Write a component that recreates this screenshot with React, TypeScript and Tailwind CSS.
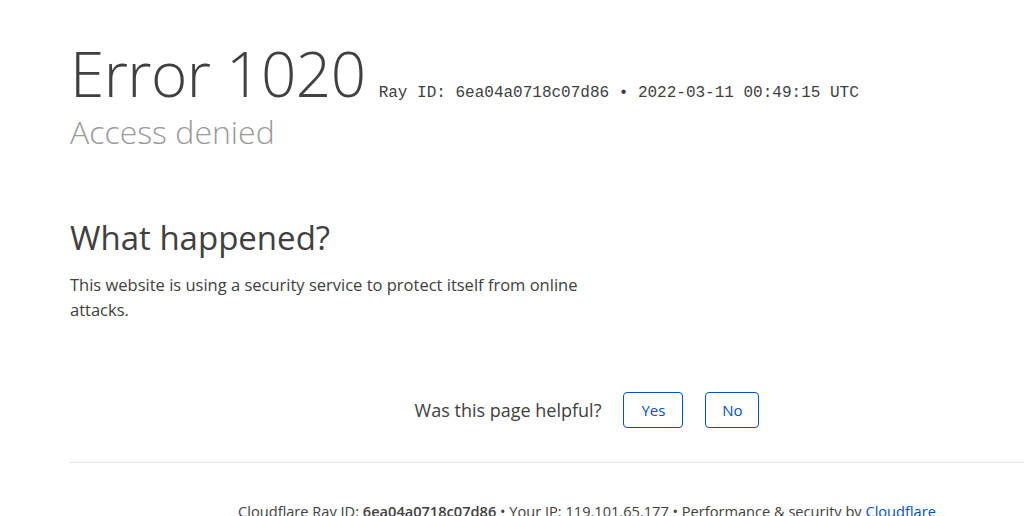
import React from "react";

export default function App() {
  return (
    <div className="w-[1024px] h-[516px] overflow-hidden bg-white" style={{ fontFamily: '"Open Sans", "Noto Sans", sans-serif' }}>
      <div className="w-[1034px] ml-[70px]">
        <div className="pt-[37px] flex items-baseline">
          <h1 className="text-[62px] leading-[72px] font-light text-[#404040] tracking-[-0.5px]">Error 1020</h1>
          <span className="ml-[13px] text-[16px] text-[#404040]" style={{ fontFamily: '"Liberation Mono", monospace' }}>
            Ray ID: 6ea04a0718c07d86 • 2022-03-11 00:49:15 UTC
          </span>
        </div>
        <h2 className="text-[32px] leading-[36px] font-light text-[#999999] mt-[5px]">Access denied</h2>

        <div className="mt-[68px] w-[522px]">
          <h2 className="text-[33px] leading-[40px] text-[#404040]">What happened?</h2>
          <p className="mt-[14px] text-[16.5px] leading-[25px] text-[#404040]">
            This website is using a security service to protect itself from online attacks.
          </p>
        </div>

        <div className="mt-[70px] flex items-center justify-center">
          <span className="text-[18px] text-[#404040] mr-[22px]">Was this page helpful?</span>
          <button className="h-[36px] w-[60px] border border-[#0051c3] rounded-[4px] text-[15px] text-[#0051c3] mr-[22px]">Yes</button>
          <button className="h-[36px] w-[54px] border border-[#0051c3] rounded-[4px] text-[15px] text-[#0051c3]">No</button>
        </div>

        <div className="mt-[34px] border-t border-[#e5e5e5]" />
        <div className="mt-[38px] text-center text-[14.6px] text-[#404040]">
          Cloudflare Ray ID: <strong className="font-semibold">6ea04a0718c07d86</strong> • Your IP: 119.101.65.177 • Performance &amp; security by <span className="text-[#0051c3]">Cloudflare</span>
        </div>
      </div>
    </div>
  );
}
